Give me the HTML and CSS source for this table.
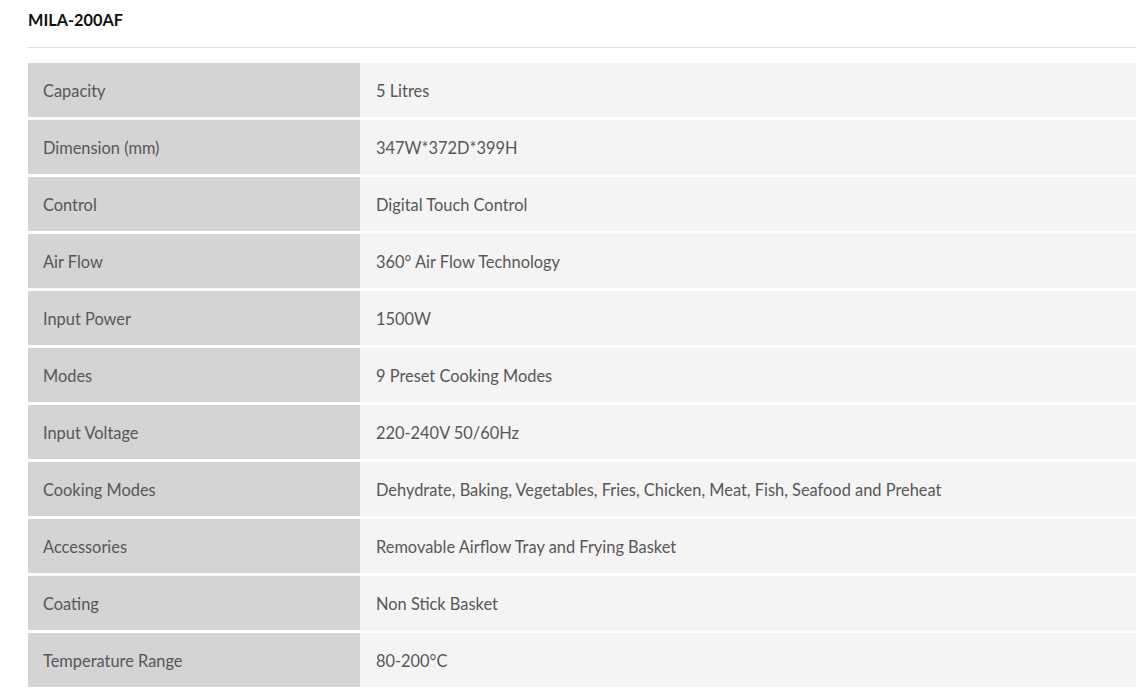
FILE: index.html
```html
<!DOCTYPE html>
<html lang="en">
<head>
<meta charset="utf-8">
<title>MILA-200AF</title>
<link rel="stylesheet" href="styles.css">
</head>
<body>
<div class="page">
  <h2 class="title">MILA-200AF</h2>
  <div class="specs">
    <div class="label">Capacity</div><div class="value">5 Litres</div>
    <div class="label">Dimension (mm)</div><div class="value">347W*372D*399H</div>
    <div class="label">Control</div><div class="value">Digital Touch Control</div>
    <div class="label">Air Flow</div><div class="value">360° Air Flow Technology</div>
    <div class="label">Input Power</div><div class="value">1500W</div>
    <div class="label">Modes</div><div class="value">9 Preset Cooking Modes</div>
    <div class="label">Input Voltage</div><div class="value">220-240V 50/60Hz</div>
    <div class="label">Cooking Modes</div><div class="value">Dehydrate, Baking, Vegetables, Fries, Chicken, Meat, Fish, Seafood and Preheat</div>
    <div class="label">Accessories</div><div class="value">Removable Airflow Tray and Frying Basket</div>
    <div class="label">Coating</div><div class="value">Non Stick Basket</div>
    <div class="label">Temperature Range</div><div class="value">80-200°C</div>
  </div>
</div>
</body>
</html>
```
FILE: styles.css
```css
html, body {
  margin: 0;
  padding: 0;
  background: #ffffff;
}
body {
  font-family: "Lato", "Open Sans", sans-serif;
}
.page {
  width: 1108px;
  margin-left: 28px;
}
.title {
  margin: 0;
  padding-top: 9px;
  height: 48px;
  box-sizing: border-box;
  font-size: 16.3px;
  font-weight: 700;
  color: #111111;
  line-height: 22px;
  border-bottom: 1px solid #dedede;
}
.specs {
  margin-top: 15px;
  display: grid;
  grid-template-columns: 332px 1fr;
  row-gap: 3px;
}
.label, .value {
  height: 54px;
  display: flex;
  align-items: center;
  font-size: 16.4px;
  color: #575757;
}
.label {
  background: #d4d4d4;
  padding-left: 15px;
}
.value {
  background: #f4f4f4;
  padding-left: 16px;
}
```
